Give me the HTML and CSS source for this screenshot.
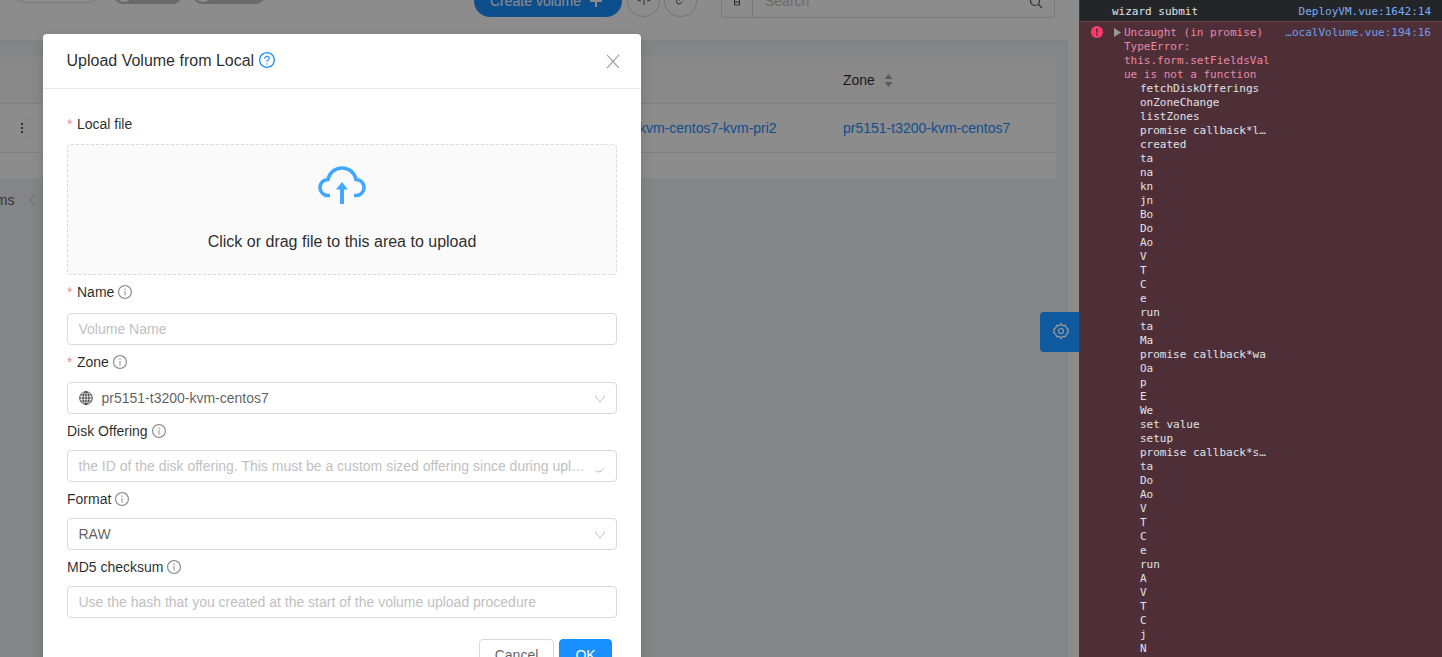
FILE: index.html
```html
<!DOCTYPE html>
<html lang="en">
<head>
<meta charset="utf-8">
<title>Upload Volume from Local</title>
<link rel="stylesheet" href="styles.css">
</head>
<body>
<svg class="defs" width="0" height="0" aria-hidden="true">
  <symbol id="i-info" viewBox="64 64 896 896"><path d="M512 64C264.6 64 64 264.6 64 512s200.6 448 448 448 448-200.6 448-448S759.4 64 512 64zm0 820c-205.4 0-372-166.6-372-372s166.6-372 372-372 372 166.6 372 372-166.6 372-372 372z"/><path d="M464 336a48 48 0 1 0 96 0 48 48 0 1 0-96 0zm72 112h-48c-4.4 0-8 3.6-8 8v272c0 4.4 3.6 8 8 8h48c4.4 0 8-3.6 8-8V456c0-4.4-3.6-8-8-8z"/></symbol>
  <symbol id="i-question" viewBox="64 64 896 896"><path d="M512 64C264.6 64 64 264.6 64 512s200.6 448 448 448 448-200.6 448-448S759.4 64 512 64zm0 820c-205.4 0-372-166.6-372-372s166.6-372 372-372 372 166.6 372 372-166.6 372-372 372z"/><path d="M623.6 316.7C593.6 290.4 554 276 512 276s-81.6 14.5-111.6 40.7C369.2 344 352 380.7 352 420v7.6c0 4.4 3.6 8 8 8h48c4.4 0 8-3.6 8-8V420c0-44.1 43.1-80 96-80s96 35.9 96 80c0 31.1-22 59.6-56.1 72.7-21.2 8.1-39.2 22.3-52.1 40.9-13.1 19-19.9 41.8-19.9 62.3V620c0 4.4 3.6 8 8 8h48c4.4 0 8-3.6 8-8v-22.7a48.3 48.3 0 0 1 30.9-44.8c59-22.7 97.1-74.7 97.1-132.5.1-39.3-17.1-76-48.3-103.3zM472 732a40 40 0 1 0 80 0 40 40 0 1 0-80 0z"/></symbol>
  <symbol id="i-chevron" viewBox="0 0 12 8"><path d="M1 1l5 6 5-6" fill="none" stroke="currentColor" stroke-width="1"/></symbol>
</svg>
<div class="app">
  <main class="page">
    <div class="toolbar">
      <div class="tool-left">
        <span class="outline-pill"></span>
        <span class="toggle toggle-a"><i class="knob"></i></span>
        <span class="toggle toggle-b"><i class="knob"></i></span>
      </div>
      <div class="tool-right">
        <span class="create-btn">Create volume
          <svg class="plus" width="12" height="12" viewBox="0 0 12 12"><path d="M5 0h2v5h5v2H7v5H5V7H0V5h5z" fill="currentColor"/></svg>
        </span>
        <span class="round-btn">
          <svg width="14" height="14" viewBox="0 0 14 14" fill="none" stroke="currentColor"><path d="M4 9H3a2.5 2.5 0 0 1 0-5C3.500 2 5 1 7 1s3.500 1 4 3a2.500 2.500 0 0 1 0 5h-1M7 6v7"/></svg>
        </span>
        <span class="round-btn">
          <svg width="14" height="14" viewBox="0 0 14 14" fill="none" stroke="currentColor"><path d="M5.500 8.500l3-3M5 6L3 8a2.500 2.500 0 0 0 3.500 3.500l2-2M9 8l2-2A2.500 2.500 0 0 0 7.500 2.500l-2 2"/></svg>
        </span>
        <span class="filter-btn">
          <svg width="10" height="14" viewBox="0 0 10 14" fill="none" stroke="currentColor"><path d="M1 1v4l1.500 2v5h5V7L9 5V1zM2.500 9h5"/></svg>
        </span>
        <span class="search-box">
          <span class="search-text">Search</span>
          <svg width="14" height="14" viewBox="0 0 14 14" fill="none" stroke="currentColor" stroke-width="1.200"><circle cx="6" cy="6" r="4.500"/><path d="M9.500 9.500L13 13"/></svg>
        </span>
      </div>
    </div>
    <div class="content">
      <div class="table">
        <div class="thead">
          <span></span><span></span><span></span>
          <span class="th-zone">Zone
            <svg class="sorter" width="9" height="13" viewBox="0 0 9 13"><path d="M4.500 0l4 5H.5zM4.500 13l-4-5h8z" fill="currentColor"/></svg>
          </span>
        </div>
        <div class="trow">
          <span class="kebab"><i></i><i></i><i></i></span>
          <span></span>
          <a class="cell-link cell-wide">pr5151-t3200-kvm-centos7-kvm-pri2</a>
          <a class="cell-link">pr5151-t3200-kvm-centos7</a>
        </div>
        <div class="tfoot"></div>
      </div>
      <div class="pager">
        <span class="pager-total">items</span>
        <svg width="9" height="12" viewBox="0 0 9 12" fill="none" stroke="currentColor"><path d="M7 1L2 6l5 5"/></svg>
      </div>
    </div>
    <div class="mask"></div>
    <div class="settings-tab">
      <svg width="18" height="18" viewBox="0 0 18 18" fill="none" stroke="currentColor" stroke-width="1.200"><path d="M9 1.500l1.600 2.200 2.700-.4 1 2.500 2.200 1.700L15.400 9l1.100 1.500-2.200 1.700-1 2.500-2.700-.4L9 16.500l-1.600-2.200-2.700.4-1-2.500-2.200-1.700L2.600 9 1.500 7.500l2.200-1.700 1-2.500 2.700.4z"/><circle cx="9" cy="9" r="2.500"/></svg>
    </div>

    <section class="modal">
      <header class="modal-head">
        <h1 class="modal-title">Upload Volume from Local
          <svg class="title-help"><use href="#i-question"/></svg>
        </h1>
        <svg class="close" width="14" height="14" viewBox="0 0 14 14" fill="none" stroke="currentColor" stroke-width="1.100"><path d="M1 1l12 13M13 1L1 14"/></svg>
      </header>
      <form class="modal-body">
        <div class="label label-first"><span class="star">*</span>Local file</div>
        <div class="dropzone">
          <svg class="cloud" width="48" height="38" viewBox="0 0 48 38"><path d="M12 29.500H10C5.500 29.500 2 26 2 21.500 2 17 5.500 13.500 10 13.500 11.500 6.500 17 2 24 2c7 0 12.500 4.500 14 11.500 4.500 0 8 3.500 8 8 0 4.500-3.500 8-8 8h-2" fill="none" stroke="currentColor" stroke-width="3.600"/><path d="M24 16l6 7.500h-4V38h-4V23.500h-4z" fill="currentColor"/></svg>
          <p class="drop-text">Click or drag file to this area to upload</p>
        </div>

        <div class="label label-req1"><span class="star">*</span>Name<svg class="info"><use href="#i-info"/></svg></div>
        <div class="field"><span class="placeholder">Volume Name</span></div>

        <div class="label label-req2"><span class="star">*</span>Zone<svg class="info"><use href="#i-info"/></svg></div>
        <div class="field">
          <svg class="globe" width="14" height="14" viewBox="0 0 14 14" fill="none" stroke="currentColor"><circle cx="7" cy="7" r="6.300"/><ellipse cx="7" cy="7" rx="3" ry="6.300"/><path d="M7 .7v12.600M.7 7h12.600M1.500 4h11M1.500 10h11"/></svg>
          <span class="value">pr5151-t3200-kvm-centos7</span>
          <svg class="chevron"><use href="#i-chevron"/></svg>
        </div>

        <div class="label">Disk Offering<svg class="info"><use href="#i-info"/></svg></div>
        <div class="field">
          <span class="placeholder truncated">the ID of the disk offering. This must be a custom sized offering since during upload, we can't know the size</span>
          <svg class="spinner" width="12" height="14" viewBox="0 0 12 14" fill="none" stroke="currentColor"><path d="M1.700 10.700Q6 14 10 8.300"/></svg>
        </div>

        <div class="label">Format<svg class="info"><use href="#i-info"/></svg></div>
        <div class="field">
          <span class="value value-plain">RAW</span>
          <svg class="chevron"><use href="#i-chevron"/></svg>
        </div>

        <div class="label">MD5 checksum<svg class="info"><use href="#i-info"/></svg></div>
        <div class="field"><span class="placeholder">Use the hash that you created at the start of the volume upload procedure</span></div>

        <div class="actions">
          <span class="btn">Cancel</span>
          <span class="btn btn-primary">OK</span>
        </div>
      </form>
    </section>
  </main>

  <aside class="devtools">
    <div class="log-row">
      <span>wizard submit</span>
      <a class="src">DeployVM.vue:1642:14</a>
    </div>
    <div class="err-row">
      <svg class="err-icon" width="12" height="12" viewBox="0 0 12 12"><circle cx="6" cy="6" r="6" fill="#ff3b6b"/><path d="M5.200 2.500h1.600v4.300H5.200zM5.200 7.800h1.600v1.600H5.200z" fill="#4e2f38"/></svg>
      <svg class="err-caret" width="7" height="9" viewBox="0 0 7 9"><path d="M0 0l7 4.500L0 9z" fill="#9a9a9a"/></svg>
      <div class="err-body">
        <div class="err-head">
          <div class="err-msg">Uncaught (in promise)<br>TypeError:<br>this.form.setFieldsVal<br>ue is not a function</div>
          <a class="src">…ocalVolume.vue:194:16</a>
        </div>
        <div class="stack">fetchDiskOfferings
onZoneChange
listZones
promise callback*l…
created
ta
na
kn
jn
Bo
Do
Ao
V
T
C
e
run
ta
Ma
promise callback*wa
Oa
p
E
We
set value
setup
promise callback*s…
ta
Do
Ao
V
T
C
e
run
A
V
T
C
j
N</div>
      </div>
    </div>
  </aside>
</div>
</body>
</html>
```

FILE: styles.css
```css
* { box-sizing: border-box; }
html, body { margin: 0; height: 100%; overflow: hidden; }
body { font-family: "Liberation Sans", Arial, sans-serif; font-size: 14px; color: rgba(0,0,0,.65); }
.defs { position: absolute; }

.app { display: flex; height: 657px; overflow: hidden; }
.page { position: relative; width: 1079px; flex: none; background: #fff; overflow: hidden; }

/* background page */
.toolbar { height: 41px; display: flex; justify-content: space-between; background: #fff; border-bottom: 1px solid #e8e8e8; width: 1068px; }
.tool-left { display: flex; gap: 9px; margin-left: 10px; align-items: flex-start; }
.outline-pill { width: 93px; height: 32px; margin: -29px 1px 0 0; border: 1px solid #d9d9d9; border-radius: 16px; background: #fff; }
.toggle { position: relative; height: 22px; margin-top: -18px; border-radius: 11px; background: #bfbfbf; display: block; }
.toggle-a { width: 70px; }
.toggle-b { width: 74px; }
.knob { position: absolute; left: 2px; top: 2px; width: 18px; height: 18px; border-radius: 50%; background: #fff; }
.tool-right { display: flex; align-items: flex-start; margin-right: 13px; }
.create-btn { display: flex; align-items: center; justify-content: center; gap: 9px; width: 148px; height: 32px; margin: -15px 1px 0 0; padding-right: 4px; border-radius: 16px; background: #1890ff; color: #fff; font-size: 14px; }
.plus { flex: none; }
.round-btn { display: flex; align-items: flex-end; justify-content: center; width: 33px; height: 32px; margin: -15px 0 0 4px; padding-bottom: 10px; border: 1px solid #d9d9d9; border-radius: 50%; color: rgba(0,0,0,.65); background: #fff; }
.filter-btn { display: flex; justify-content: center; align-items: flex-end; width: 32px; height: 32px; margin: -14px -1px 0 24px; padding-bottom: 10px; border: 1px solid #d9d9d9; border-radius: 4px 0 0 4px; color: rgba(0,0,0,.65); }
.search-box { display: flex; justify-content: space-between; align-items: center; width: 303px; height: 32px; margin-top: -14px; padding: 0 11px 0 12px; border: 1px solid #d9d9d9; border-radius: 0 4px 4px 0; color: rgba(0,0,0,.65); }
.search-text { color: #bfbfbf; margin-top: -2px; }

.content { width: 1068px; height: 616px; background: #f0f2f5; padding-top: 16px; }
.table { width: 1056px; background: #fff; color: rgba(0,0,0,.85); }
.thead, .trow { display: grid; grid-template-columns: 44px 486px 298px 228px; align-items: center; border-bottom: 1px solid #e8e8e8; }
.thead { height: 47px; background: #fafafa; }
.trow { height: 49px; }
.tfoot { height: 25px; }
.th-zone { display: flex; align-items: center; gap: 9px; padding-left: 15px; }
.sorter { color: #a6a6a6; }
.cell-link { color: #1890ff; padding-left: 15px; white-space: nowrap; }
.cell-wide { padding-left: 21px; }
.kebab { display: flex; flex-direction: column; align-items: center; justify-content: center; gap: 2px; width: 24px; height: 24px; margin-left: 10px; border: 1px solid #fafafa; border-radius: 50%; }
.kebab i { display: block; width: 2px; height: 2px; background: rgba(0,0,0,.65); }
.pager { display: flex; align-items: center; gap: 14px; margin: 13px 0 0 -19px; height: 18px; }
.pager-total { line-height: 18px; }
.pager svg { color: #bfbfbf; }

.mask { position: absolute; inset: 0; background: rgba(0,0,0,.45); }
.settings-tab { position: absolute; left: 1040px; top: 312px; width: 39px; height: 40px; display: flex; align-items: center; padding: 0 0 2px 12px; background: #0f5a9e; border-radius: 4px 0 0 4px; color: #9a9a9a; }

/* modal */
.modal { position: absolute; left: 43px; top: 34px; width: 598px; background: #fff; border-radius: 4px; box-shadow: 0 4px 12px rgba(0,0,0,.15); }
.modal-head { display: flex; justify-content: space-between; align-items: center; height: 55px; padding: 0 21px 0 23.5px; border-bottom: 1px solid #e8e8e8; }
.modal-title { margin: 0; display: flex; align-items: center; gap: 5px; font-size: 16px; font-weight: 400; line-height: 22px; color: rgba(0,0,0,.85); }
.title-help { width: 16px; height: 16px; margin-top: -2px; fill: #1890ff; }
.close { color: rgba(0,0,0,.45); }
.modal-body { display: block; padding: 18px 24px 24px; }

.label { display: flex; align-items: center; height: 34px; margin-bottom: 2px; line-height: 22px; color: rgba(0,0,0,.85); white-space: nowrap; }
.label-first { height: 28px; padding-top: 6px; margin-bottom: 9px; }
.label-req1 { margin-bottom: 4px; }
.label-req2 { margin-bottom: 3px; }
.star { color: #f98b8b; margin-right: 4px; font-size: 14px; width: 6px; }
.info { width: 14px; height: 14px; margin-left: 4px; fill: rgba(0,0,0,.45); }

.dropzone { height: 131px; padding-top: 21px; text-align: center; background: #fafafa; border: 1px dashed #d9d9d9; border-radius: 4px; }
.cloud { display: block; margin: 0 auto; color: #40a9ff; }
.drop-text { margin: 26px 0 0; font-size: 16px; line-height: 24px; color: rgba(0,0,0,.85); }

.field { display: flex; align-items: center; height: 32px; padding: 0 10px 0 10.5px; background: #fff; border: 1px solid #d9d9d9; border-radius: 4px; }
.placeholder { color: #bfbfbf; white-space: nowrap; }
.truncated { flex: 1; min-width: 0; overflow: hidden; text-overflow: ellipsis; padding-right: 6px; }
.value { margin-left: 9px; flex: 1; }
.value-plain { margin-left: 0; }
.globe { flex: none; color: rgba(0,0,0,.65); }
.chevron { width: 12px; height: 8px; color: #bfbfbf; flex: none; margin-top: 1px; }
.spinner { color: #bfbfbf; flex: none; margin-top: 2px; }

.actions { display: flex; justify-content: flex-end; gap: 5px; margin-top: 21px; padding-right: 5px; }
.btn { display: flex; align-items: center; justify-content: center; width: 75px; height: 32px; border: 1px solid #d9d9d9; border-radius: 4px; background: #fff; }
.btn-primary { width: 53px; background: #1890ff; border-color: #1890ff; color: #fff; }

/* devtools */
.devtools { flex: 1; min-width: 0; background: #4e2f38; border-left: 1px solid #3c3c3c; font: 11px/14px "DejaVu Sans Mono", monospace; color: #e0e2e5; overflow: hidden; }
.log-row { display: flex; justify-content: space-between; height: 22px; padding: 5px 11px 0 32px; background: #242528; border-bottom: 1px solid #6e3f47; white-space: nowrap; }
.src { color: #7cacf8; white-space: nowrap; }
.err-row { position: relative; padding: 4px 11px 0 44px; }
.err-icon { position: absolute; left: 11px; top: 4px; }
.err-caret { position: absolute; left: 34px; top: 6px; }
.err-head { display: flex; justify-content: space-between; }
.err-msg { color: #e88aa6; white-space: nowrap; }
.err-head .src { color: #6fa0e8; }
.stack { padding-left: 16px; white-space: pre; }
```
